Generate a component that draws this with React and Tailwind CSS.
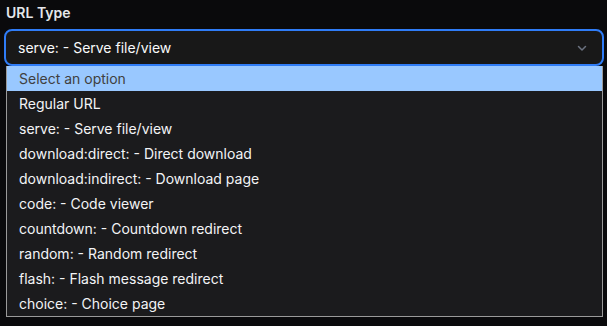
export default function App() {
  const opts = [
    "Regular URL",
    "serve: - Serve file/view",
    "download:direct: - Direct download",
    "download:indirect: - Download page",
    "code: - Code viewer",
    "countdown: - Countdown redirect",
    "random: - Random redirect",
    "flash: - Flash message redirect",
    "choice: - Choice page",
  ];
  return (
    <div className="w-[607px] h-[326px] bg-[#0a0a0c] overflow-hidden" style={{ fontFamily: "Inter, 'Liberation Sans', sans-serif" }}>
      <div className="pt-[3px] pl-[6px] text-[14px] leading-[20px] font-semibold text-[#e5e7eb]">URL Type</div>
      <div className="mt-[6px] ml-[4px] w-[600px] h-[37px] rounded-[8px] border-2 border-[#2f7cf6] bg-[#181818] flex items-center justify-between pl-[12px] pr-[14px]">
        <span className="text-[14px] font-normal text-[#f9fafb]">serve: - Serve file/view</span>
        <svg width="12" height="12" viewBox="0 0 24 24" fill="none" stroke="#6b7280" strokeWidth="3" strokeLinecap="round" strokeLinejoin="round"><path d="M5 9l7 7 7-7" /></svg>
      </div>
      <div className="ml-[6px] w-[597px] border border-[#9a9a9a] border-t-0 bg-[#1b1b1d]">
        <div className="h-[25px] bg-[#99c8ff] text-[#404040] text-[14px] flex items-center pl-[12px]">Select an option</div>
        {opts.map((o) => (
          <div key={o} className="h-[25px] text-[#f3f4f6] text-[14px] flex items-center pl-[12px]">{o}</div>
        ))}
      </div>
    </div>
  );
}
